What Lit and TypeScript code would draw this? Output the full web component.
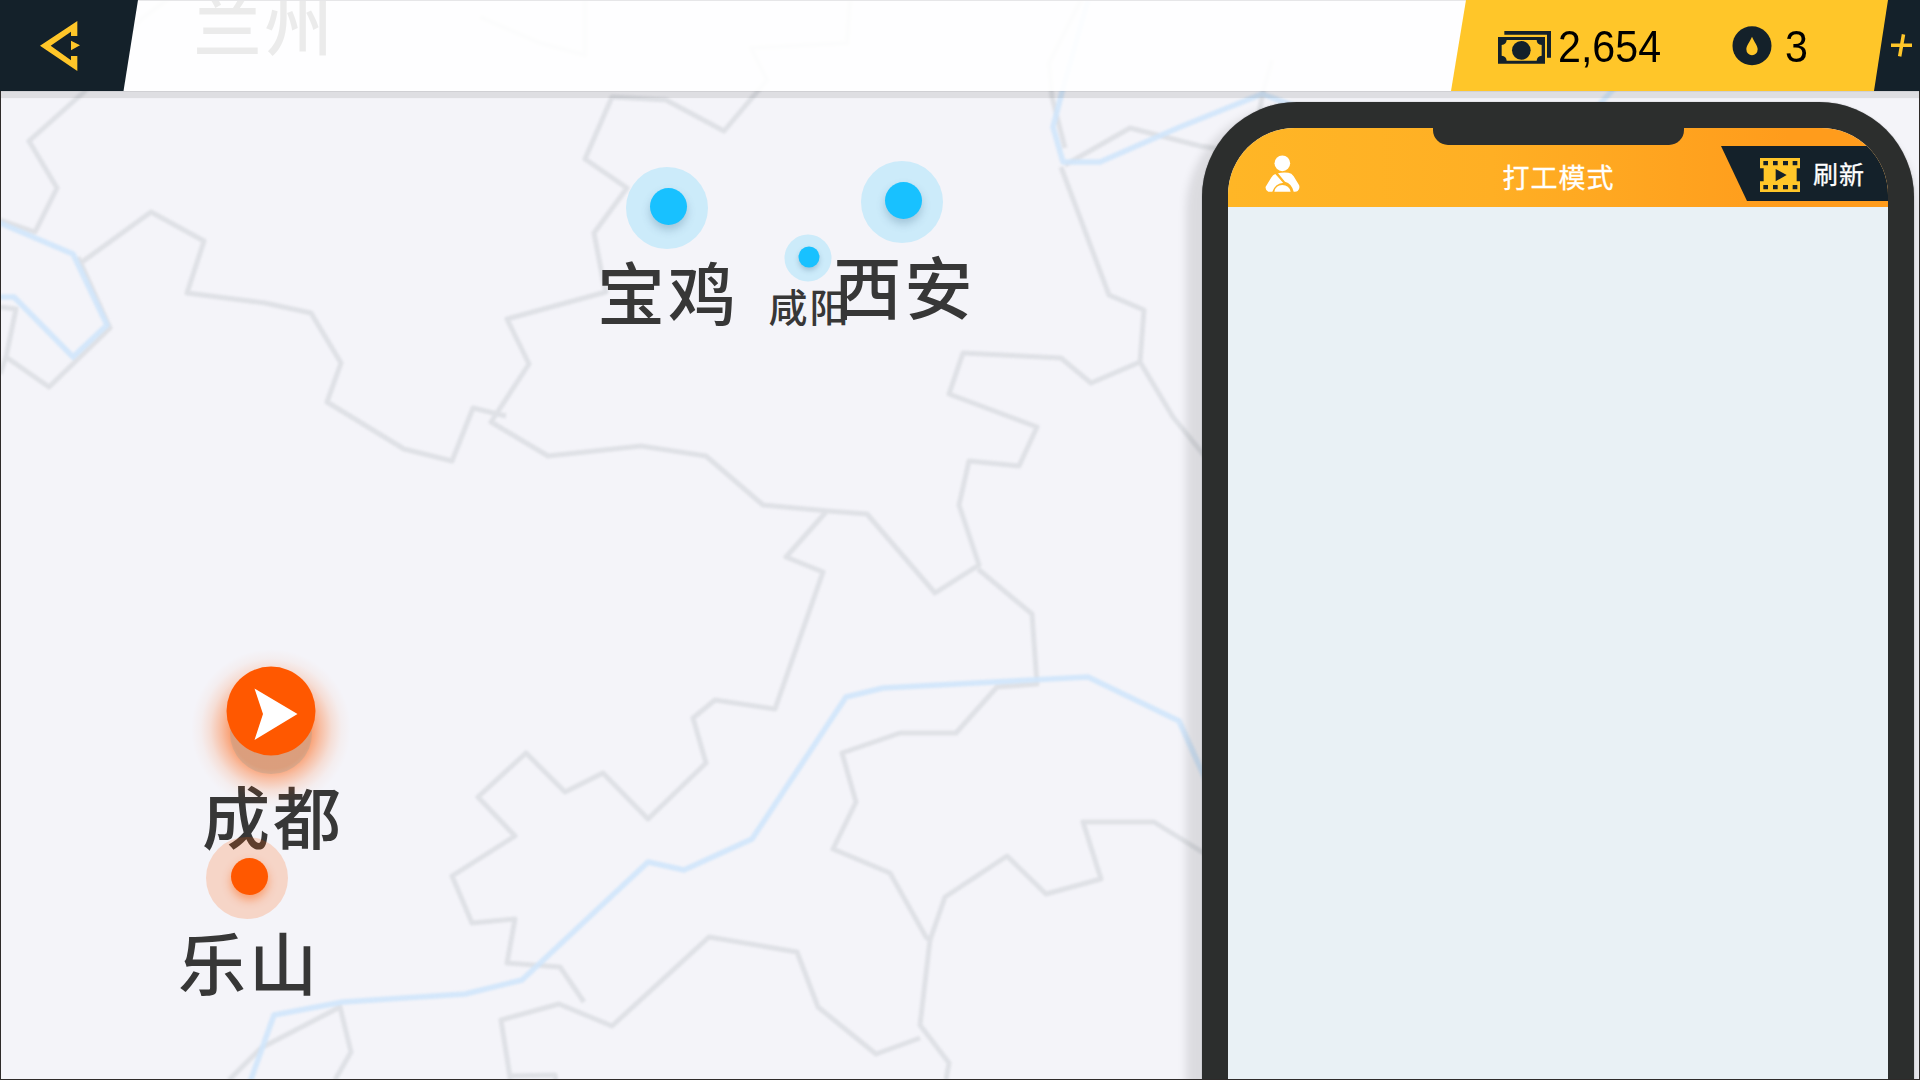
import { LitElement, html, css, svg } from "lit";
import { customElement, property } from "lit/decorators.js";
import { classMap } from "lit/directives/class-map.js";
import { styleMap } from "lit/directives/style-map.js";

interface City {
  name: string;
  x: number;
  y: number;
  kind: "open" | "visited" | "current" | "hidden";
  small?: boolean;
  labelX: number;
  labelY: number;
}

const CITIES: City[] = [
  { name: "兰州", x: 262, y: -80, kind: "hidden", labelX: 262.5, labelY: 22 },
  { name: "咸阳", x: 808, y: 257.5, kind: "open", small: true, labelX: 807.5, labelY: 304.5 },
  { name: "宝鸡", x: 667, y: 208, kind: "open", labelX: 666, labelY: 291 },
  { name: "西安", x: 902, y: 202, kind: "open", labelX: 902.5, labelY: 285 },
  { name: "成都", x: 271, y: 711, kind: "current", labelX: 271, labelY: 815 },
  { name: "乐山", x: 247, y: 878, kind: "visited", labelX: 247, labelY: 961 },
];

const BORDERS: string[] = [
  "180,-10 140,20 84,92 29,141 57,188 35,232 0,220",
  "78,257 110,328 49,387 6,357 16,309 0,307",
  "6,357 0,374",
  "82,262 151,212 204,241 187,293 265,303 311,313 341,363 327,402 404,449 452,461 473,408 506,416",
  "480,17 540,43 585,55 585,0",
  "850,0 847,43 751,48 767,80 724,131 666,100 612,97 585,159 627,188 594,233 603,280 606,292 507,319 529,364 491,422 548,456 641,446 706,456 763,505 828,511 867,514 935,593 979,565 959,505 969,461 1019,466 1037,427 949,394 963,353 1061,358 1091,383 1140,362",
  "1081,0 1049,63 1052,97 1065,148",
  "1065,165 1130,128 1200,146 1240,152",
  "1272,60 1263,92 1256,130",
  "1061,167 1109,295 1144,310 1140,362 1173,417 1220,475",
  "826,512 786,557 823,572 775,709 715,700 693,718 706,763 648,819 603,773 565,792 526,753 478,797 515,836 452,876 472,923 515,919 507,963 560,967 584,1002",
  "978,569 1032,614 1037,684 997,687 956,733 900,733 842,753 856,802 833,849 890,873 926,937 930,940 920,1025 949,1063 946,1080",
  "930,940 945,897 1007,856 1046,894 1101,879 1083,822 1154,822 1215,860",
  "510,1090 510,1077 501,1020 559,1004 612,1026 709,937 797,952 818,1007 876,1054 920,1038",
  "510,1076 555,1075 557,1090",
  "229,1080 261,1048 340,1007 351,1052 335,1080",
];

const RIVERS: string[] = [
  "0,223 73,254 107,325 73,357 14,297 0,297",
  "1088,0 1062,92 1053,127 1063,162 1100,162 1180,127 1262,94 1300,108",
  "1590,115 1618,84",
  "249,1085 274,1015 343,1002 465,994 522,980 648,862 684,870 752,839 846,697 883,688 1088,677 1179,721 1215,800",
];

@customElement("city-marker")
class CityMarker extends LitElement {
  @property() kind = "open";
  @property({ type: Boolean }) small = false;

  static styles = css`
    :host { display: block; }
    .halo {
      width: 82px; height: 82px; border-radius: 50%;
      display: flex; align-items: center; justify-content: center;
      background: rgba(24, 193, 255, 0.18);
    }
    .dot {
      width: 37px; height: 37px; border-radius: 50%; margin: -3px 0 0 3px;
      background: #18c1ff; box-shadow: 0 5px 9px rgba(70, 110, 140, 0.3);
    }
    .small { width: 47px; height: 47px; }
    .small .dot { width: 21px; height: 21px; margin: -2px 0 0 2px; box-shadow: 0 3px 5px rgba(70, 110, 140, 0.3); }
    .visited { background: rgba(255, 88, 0, 0.2); }
    .visited .dot { background: #ff5800; margin-left: 4px; box-shadow: 0 5px 10px rgba(255, 88, 0, 0.45); }
    .pin { display: block; }
  `;

  render() {
    if (this.kind === "hidden") return html``;
    if (this.kind === "current") {
      return html`<svg class="pin" width="200" height="200" viewBox="0 0 200 200">
        <defs>
          <radialGradient id="glow">
            <stop offset="0.5" stop-color="#ff5800" stop-opacity="0.55" />
            <stop offset="0.62" stop-color="#ff5800" stop-opacity="0.34" />
            <stop offset="0.76" stop-color="#ff5800" stop-opacity="0.14" />
            <stop offset="0.88" stop-color="#ff5800" stop-opacity="0.04" />
            <stop offset="1" stop-color="#ff5800" stop-opacity="0" />
          </radialGradient>
        </defs>
        <circle cx="100" cy="118" r="80" fill="url(#glow)" />
        <circle cx="100" cy="122" r="41" fill="#b0a090" fill-opacity="0.42" />
        <circle cx="100" cy="100" r="44.500" fill="#ff5800" />
        <path d="M83.500 77.500 126.500 103 83.500 129 92 103Z" fill="#fff" />
      </svg>`;
    }
    return html`<div class=${classMap({ halo: true, small: this.small, visited: this.kind === "visited" })}>
      <div class="dot"></div>
    </div>`;
  }
}

@customElement("world-map")
class WorldMap extends LitElement {
  static styles = css`
    :host { display: block; width: 1920px; height: 1080px; position: relative; overflow: hidden; background: #f4f4f9; }
    .lines { display: block; filter: blur(1.3px); }
    .border { fill: none; stroke: #dfe1e6; stroke-width: 5; stroke-linejoin: round; }
    .river { fill: none; stroke: #d0e5fb; stroke-opacity: 0.9; stroke-width: 5.5; stroke-linejoin: round; }
    .marker { position: absolute; transform: translate(-50%, -50%); }
    .label {
      position: absolute; transform: translate(-50%, -50%); white-space: nowrap;
      font: 500 68px/1 "Noto Sans CJK SC", sans-serif; letter-spacing: 3px; margin-left: 2px; color: #373737;
    }
    .label.small { font-size: 39px; letter-spacing: 2px; }
  `;

  render() {
    return html`
      <svg class="lines" width="1920" height="1080" viewBox="0 0 1920 1080">
        ${BORDERS.map((p) => svg`<polyline class="border" points=${p} />`)}
        ${RIVERS.map((p) => svg`<polyline class="river" points=${p} />`)}
      </svg>
      ${CITIES.map(
        (c) => html`
          <div class=${classMap({ label: true, small: !!c.small })}
            style=${styleMap({ left: `${c.labelX}px`, top: `${c.labelY}px` })}>${c.name}</div>
          <city-marker class="marker" kind=${c.kind} ?small=${!!c.small}
            style=${styleMap({ left: `${c.x}px`, top: `${c.y}px` })}></city-marker>
        `,
      )}
    `;
  }
}

@customElement("top-bar")
class TopBar extends LitElement {
  static styles = css`
    :host { display: block; height: 91px; }
    .bar { display: flex; height: 91px; background: rgba(255, 255, 255, 0.9); box-shadow: inset 0 1px 0 #e6e6e8, 0 7px 1px rgba(0, 0, 0, 0.09), 0 1px 0 rgba(0, 0, 0, 0.06); }
    .back { width: 138px; background: #14212a; clip-path: polygon(0 0, 100% 0, 123.5px 100%, 0 100%); }
    .back svg { display: block; margin: 21px 0 0 40px; }
    .space { flex: 1; }
    .money {
      width: 437px; display: flex; background: #ffc629; margin-right: -14px;
      clip-path: polygon(15px 0, 100% 0, 100% 100%, 0 100%);
    }
    .cash { margin: 31px 0 0 47px; }
    .num { font: 45px/1 "Liberation Sans", sans-serif; color: #000; margin-top: 24px; transform-origin: 0 0; transform: scaleX(0.915); }
    .total { margin-left: 6.500px; width: 173.500px; }
    .drop { margin: 26px 0 0 1px; }
    .fuel { margin-left: 12.500px; }
    .add { width: 46px; background: #14212a; clip-path: polygon(14px 0, 100% 0, 100% 100%, 0 100%); }
    .add svg { display: block; margin: 34px 0 0 17px; }
  `;

  render() {
    return html`<div class="bar">
      <div class="back">
        <svg width="40" height="50" viewBox="0 0 120 150">
          <path fill="#ffc629" d="M0 74 112 0V45H93V32L32 74 93 118V105H112V150ZM93 59 120 73 93 88Z" />
        </svg>
      </div>
      <div class="space"></div>
      <div class="money">
        <svg class="cash" width="53" height="33" viewBox="0 0 159 99">
          <path fill="#14212a" d="M19 0H159V80H147V11H19Z" />
          <path fill="#14212a" d="M0 18H141V98H0Z" />
          <path fill="#ffc629" d="M26 27H116Q116 40 131 42V74Q117 76 116 89H26Q25 76 11 74V42Q25 40 26 27Z" />
          <circle cx="70" cy="58" r="28" fill="#14212a" />
        </svg>
        <div class="num total">2,654</div>
        <svg class="drop" width="40" height="40" viewBox="0 0 120 120">
          <circle cx="60" cy="59" r="58.500" fill="#14212a" />
          <path fill="#ffc629" d="M60 32C66 47 77 58 77 70A17 18 0 0 1 43 70C43 58 54 47 60 32Z" />
        </svg>
        <div class="num fuel">3</div>
      </div>
      <div class="add">
        <svg width="22" height="23" viewBox="0 0 66 69">
          <path fill="none" stroke="#ffc629" stroke-width="10.500" d="M0 34H63M37.500 1 26 67" />
        </svg>
      </div>
    </div>`;
  }
}

@customElement("work-phone")
class WorkPhone extends LitElement {
  static styles = css`
    :host { display: block; }
    .frame {
      box-sizing: border-box; width: 712px; height: 1100px; border: 26px solid #2c2e2d; border-bottom: 0;
      border-radius: 95px 95px 0 0; background: #2c2e2d;
      box-shadow: -6px 14px 9px 10px rgba(0, 0, 0, 0.1), 0 0 1px 0 rgba(0, 0, 0, 0.5);
    }
    .screen { height: 100%; border-radius: 67px 67px 0 0; overflow: hidden; background: #e9f1f5; position: relative; }
    .head {
      height: 79px; display: flex; align-items: flex-start; box-sizing: border-box; padding-left: 37px;
      background: linear-gradient(90deg, #ffb626, #ffaf24 40%, #ff9c1c 85%);
    }
    .notch { position: absolute; left: 204.500px; top: -2px; width: 251.500px; height: 19px; border-radius: 0 0 15px 15px; background: #2c2e2d; }
    .person { margin-top: 27px; flex: none; }
    .title { font: 27px/30px "Noto Sans CJK SC", sans-serif; -webkit-text-stroke: 0.3px #fff; letter-spacing: 1px; color: #fff; margin: 34px 0 0 202.500px; width: 221px; }
    .refresh {
      margin-top: 18px; width: 167px; height: 55px; display: flex; background: #14212a; color: #fff; flex: none;
      clip-path: polygon(0 0, 100% 0, 100% 100%, 26px 100%);
    }
    .refresh svg { margin: 12px 0 0 38.500px; flex: none; }
    .refresh span { font: 25px/30px "Noto Sans CJK SC", sans-serif; -webkit-text-stroke: 0.3px #fff; letter-spacing: 1px; margin: 12px 0 0 12.500px; white-space: nowrap; }
  `;

  render() {
    return html`<div class="frame"><div class="screen">
      <div class="head">
        <svg class="person" width="35" height="38" viewBox="0 0 105 114">
          <g fill="#fff">
            <circle cx="52" cy="25" r="23.500" />
            <path d="M39 55Q52 51 70 53Q80 54 86 64L102 90Q106 100 98 108Q94 111 86 110Q80 85 60 80Z" />
            <path d="M31 57 57 83Q30 85 22 110H10Q0 106 2 95L18 69Q24 59 31 57Z" />
            <path d="M28 110Q32 90 52 90Q72 90 77 110Z" />
          </g>
          <path d="M33 55 58 85" stroke="#ffb626" stroke-width="4" />
        </svg>
        <div class="title">打工模式</div>
        <div class="refresh">
          <svg width="41" height="34" viewBox="0 0 123 102">
            <path fill="#ffc629" d="M0 0H120V31H110V70H120V102H0V70H11V31H0Z" />
            <path fill="#14212a" d="M10 9H24V22H10ZM39 9H53V22H39ZM69 9H84V22H69ZM98 9H112V22H98ZM10 81H24V94H10ZM39 81H53V94H39ZM69 81H84V94H69ZM98 81H112V94H98ZM47 33 80 51 47 70Z" />
          </svg>
          <span>刷新</span>
        </div>
      </div>
      <div class="notch"></div>
    </div></div>`;
  }
}

@customElement("app-root")
class AppRoot extends LitElement {
  static styles = css`
    :host { display: block; }
    .stage { display: grid; width: 1920px; height: 1080px; overflow: hidden; background: #f4f4f9; }
    .stage > * { grid-area: 1 / 1; }
    .hud { display: flex; flex-direction: column; height: 1080px; overflow: hidden; z-index: 1; min-width: 0; }
    .panel { align-self: flex-end; margin: 11px 6px 0 0; }
    .edge { margin-top: 91px; border: solid #2e2b2a; border-width: 0 1px 1px 1px; z-index: 2; height: 988px; min-width: 0; }
  `;

  render() {
    return html`<div class="stage">
      <world-map></world-map>
      <div class="edge"></div>
      <div class="hud">
        <top-bar></top-bar>
        <work-phone class="panel"></work-phone>
      </div>
    </div>`;
  }
}
